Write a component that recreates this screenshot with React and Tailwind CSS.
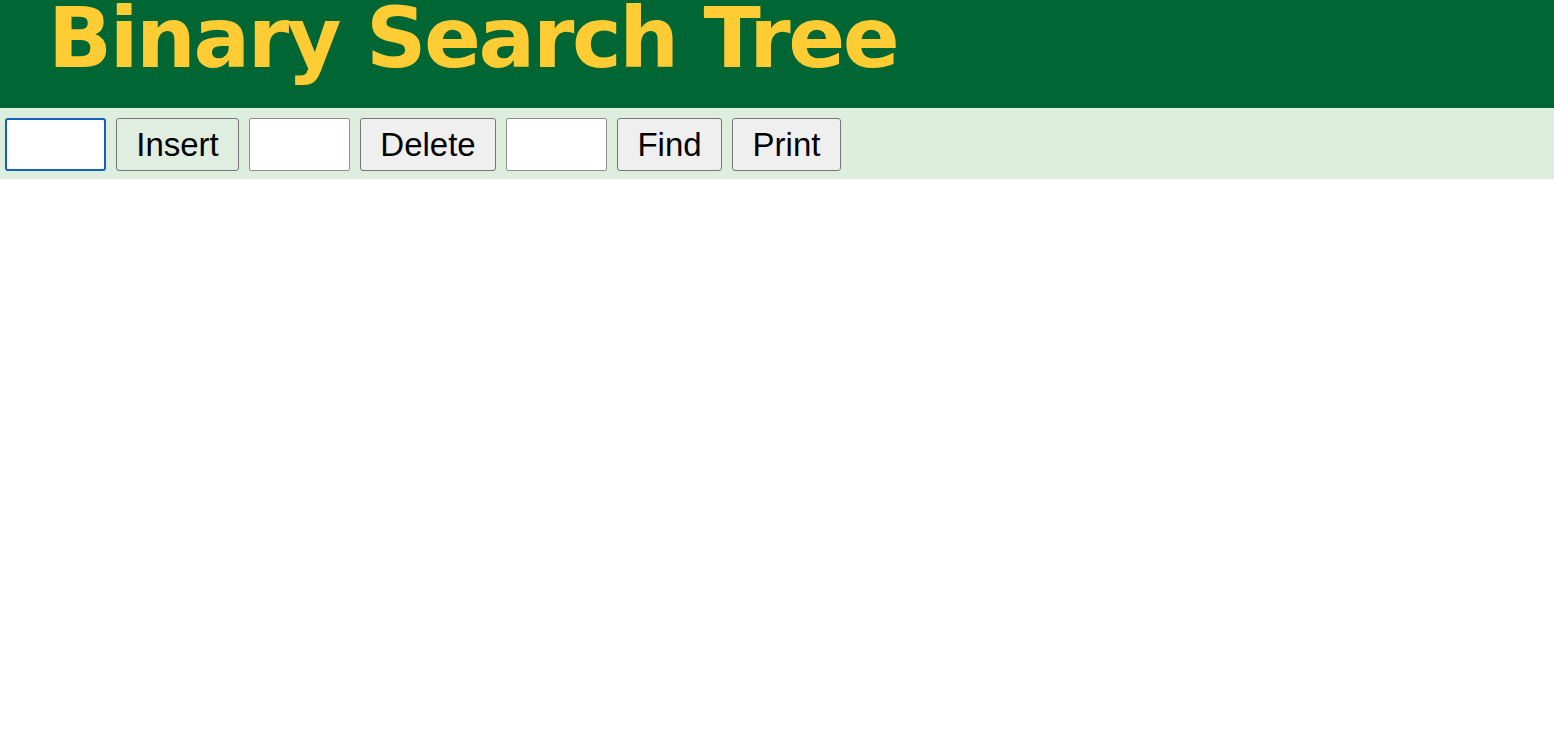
// App.jsx

function Toolbar() {
    const input = "w-[101px] h-[53px] bg-white border border-[#8f8f8f] rounded-[2px] px-1 text-[32px] outline-none";
    const btn = "h-[53px] px-[16px] bg-[#efefef] border border-[#767676] rounded-[3px] text-[33px] text-black leading-none";

    return (
        <div className="bg-[#ddeedf] h-[71px] pl-[5px] pt-[10px] flex items-start gap-[10px] font-['Liberation_Sans',Arial,sans-serif]">
            <input className="w-[101px] h-[53px] bg-white border-2 border-[#1560bd] rounded-[3px] px-1 text-[32px] outline-none" />
            <button className={btn + " !bg-[#e0eee2] w-[123px]"}>Insert</button>
            <input className={input} />
            <button className={btn + " w-[136px]"}>Delete</button>
            <input className={input} />
            <button className={btn + " w-[105px]"}>Find</button>
            <button className={btn + " w-[109px]"}>Print</button>
        </div>
    );
}

export default function App() {
    return (
        <div className="min-h-[736px] bg-white">
            <header className="bg-[#006633] h-[108px] pl-[48px] pt-[2px]">
                <h1 className="text-[#ffcc33] font-['DejaVu_Sans',Verdana,sans-serif] font-bold text-[84px] leading-[72px] tracking-[-2.4px]">
                    Binary Search Tree
                </h1>
            </header>
            <Toolbar />
        </div>
    );
}
